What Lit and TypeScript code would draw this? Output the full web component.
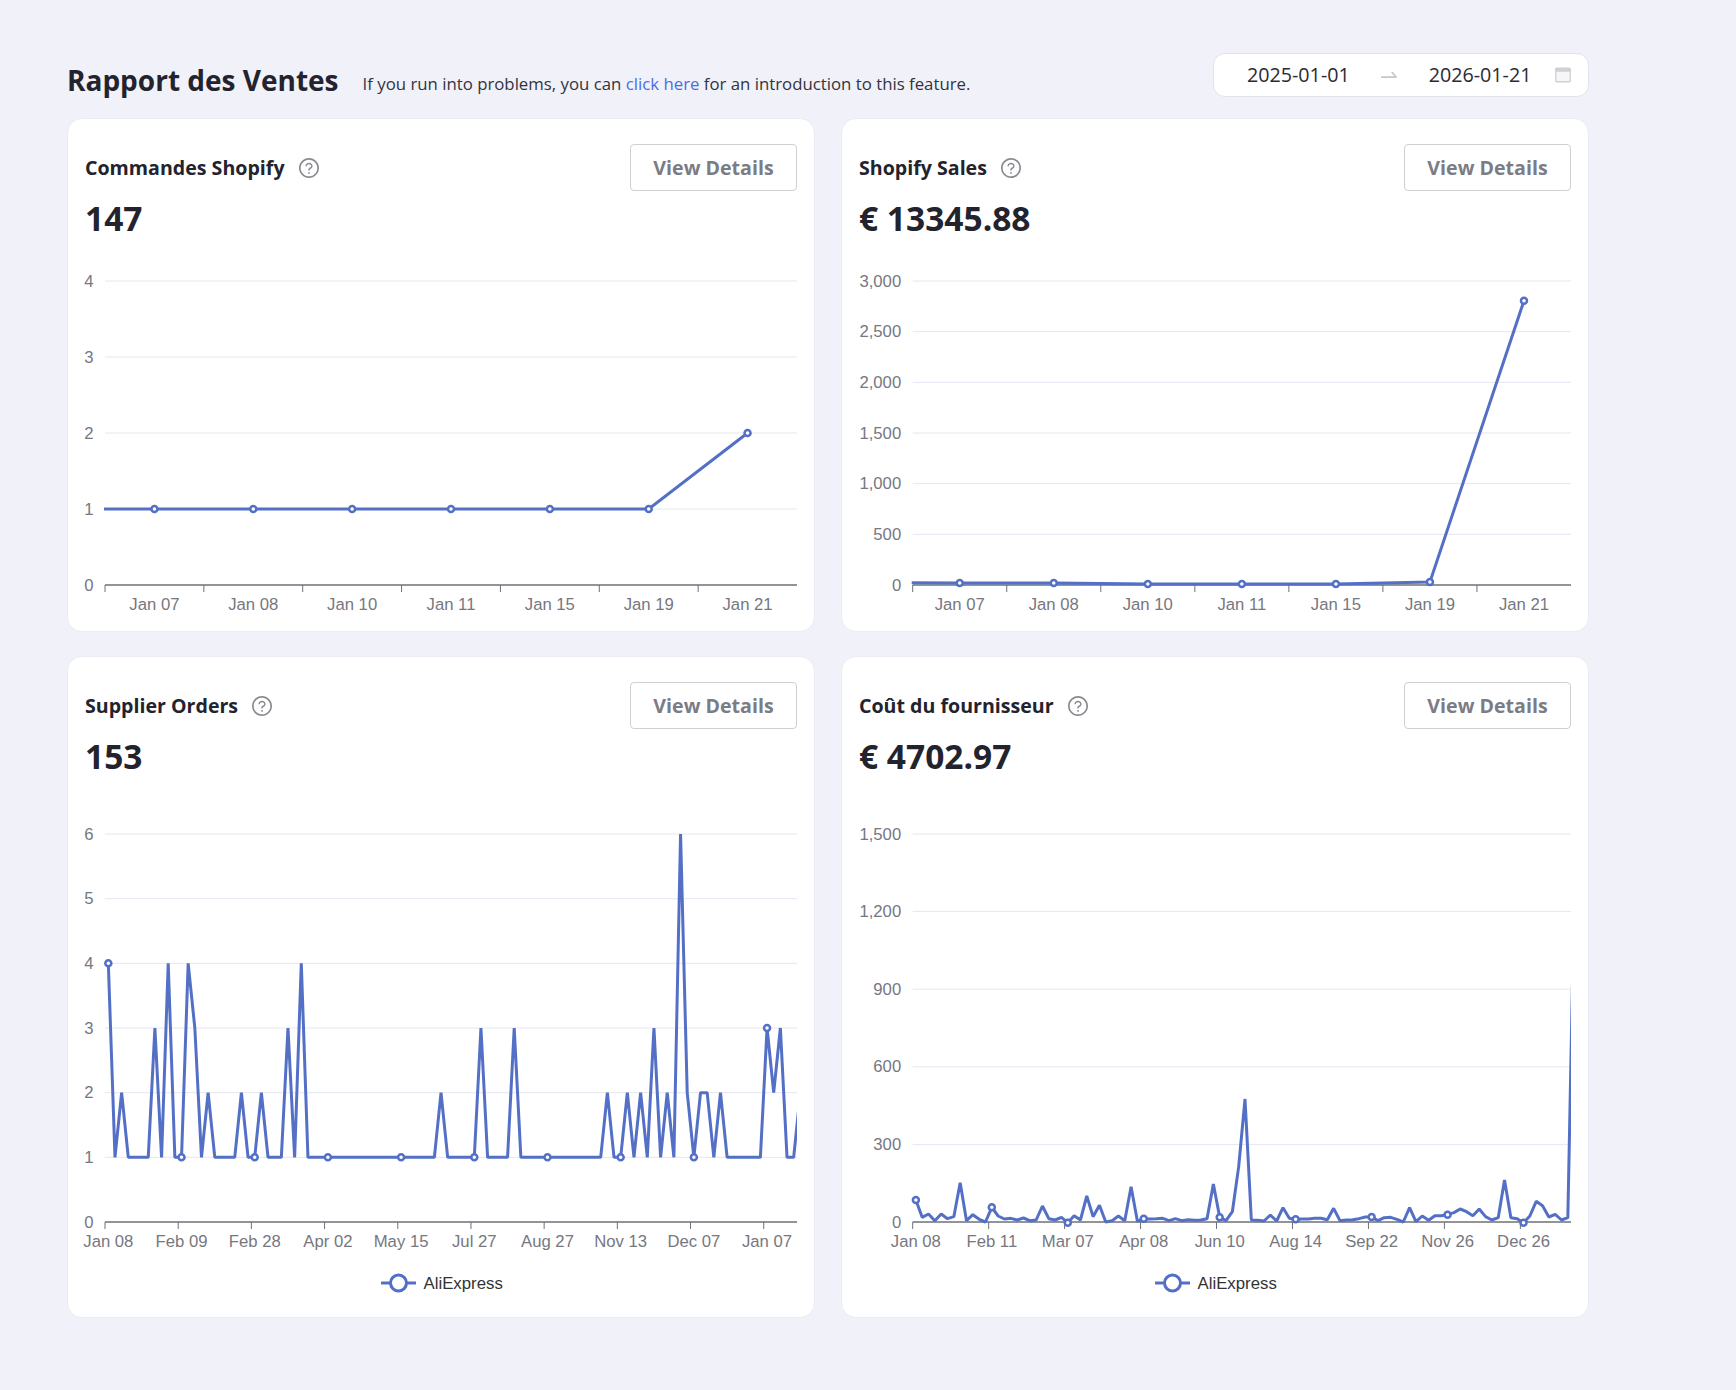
import { LitElement, html, css, svg } from "lit";
import { customElement, property } from "lit/decorators.js";

interface ChartConfig {
  axisLeft: number;
  top: number;
  axisY: number;
  height: number;
  yTicks: number[];
  data: number[];
  count: number;
  every: number;
  labels: string[];
  lead?: number;
  legend?: string;
}

const WIDTH = 712;

@customElement("line-chart")
class LineChart extends LitElement {
  @property({ attribute: false }) config!: ChartConfig;

  static styles = css`
    :host { display: block; }
    svg { display: block; width: 712px; overflow: visible; }
    .grid { stroke: #e4e7f2; stroke-width: 1; }
    .axis { stroke: #6e7079; stroke-width: 1.5; }
    .tick { stroke: #6e7079; stroke-width: 1; }
    .lbl { font: 16.7px "Liberation Sans", Arial, sans-serif; fill: #77777f; }
    .series { fill: none; stroke: #5470c6; stroke-width: 3; stroke-linejoin: bevel; }
    .mark { fill: #fff; stroke: #5470c6; stroke-width: 2.5; }
    .legend-line { stroke: #5470c6; stroke-width: 3; }
    .legend-mark { fill: #fff; stroke: #5470c6; stroke-width: 3; }
    .legend-text { font: 16.8px "Liberation Sans", Arial, sans-serif; fill: #333; }
  `;

  render() {
    const c = this.config;
    const max = c.yTicks[c.yTicks.length - 1];
    const step = (WIDTH - c.axisLeft) / c.count;
    const yOf = (v: number) => c.axisY - (v / max) * (c.axisY - c.top);
    const xOf = (i: number) => c.axisLeft + (i + 0.5) * step;
    const pts = c.data.map((v, i) => [xOf(i), yOf(v)]);
    if (c.lead !== undefined) pts.unshift([c.axisLeft - 1, yOf(c.lead)]);
    const line = pts.map((p) => `${p[0].toFixed(2)},${p[1].toFixed(2)}`).join(" ");
    const tickIdx = c.labels.map((_, i) => i * c.every);
    return html`<svg height=${c.height} viewBox="0 0 ${WIDTH} ${c.height}">
      <defs>
        <clipPath id="plot"><rect x=${c.axisLeft - 4} y="0" width=${WIDTH - c.axisLeft + 4} height=${c.axisY + 10}></rect></clipPath>
      </defs>
      ${c.yTicks.map((t) => svg`
        ${t > 0 ? svg`<line class="grid" x1=${c.axisLeft} x2=${WIDTH} y1=${yOf(t)} y2=${yOf(t)}></line>` : ""}
        <text class="lbl" x=${c.axisLeft - 11.5} y=${yOf(t) + 5.5} text-anchor="end">${t.toLocaleString("en-US")}</text>
      `)}
      <line class="axis" x1=${c.axisLeft} x2=${WIDTH} y1=${c.axisY} y2=${c.axisY}></line>
      ${tickIdx.map((i) => svg`
        <line class="tick" x1=${c.axisLeft + i * step} x2=${c.axisLeft + i * step} y1=${c.axisY} y2=${c.axisY + 7}></line>
        <text class="lbl" x=${xOf(i)} y=${c.axisY + 24.5} text-anchor="middle">${c.labels[i / c.every]}</text>
      `)}
      <g clip-path="url(#plot)">
        <polyline class="series" points=${line}></polyline>
      </g>
      ${tickIdx.map((i) => svg`<circle class="mark" cx=${xOf(i)} cy=${yOf(c.data[i])} r="3"></circle>`)}
      ${c.legend
        ? svg`
        <line class="legend-line" x1="296" x2="331" y1=${c.height - 17} y2=${c.height - 17}></line>
        <circle class="legend-mark" cx="313.5" cy=${c.height - 17} r="8"></circle>
        <text class="legend-text" x="338.5" y=${c.height - 11.5}>${c.legend}</text>`
        : ""}
    </svg>`;
  }
}

const supplier = [
  4, 1, 2, 1, 1, 1, 1, 3, 1, 4, 1, 1, 4, 3, 1, 2, 1, 1, 1, 1, 2, 1, 1, 2, 1, 1, 1, 3, 1, 4, 1, 1, 1, 1, 1, 1, 1, 1, 1, 1,
  1, 1, 1, 1, 1, 1, 1, 1, 1, 1, 2, 1, 1, 1, 1, 1, 3, 1, 1, 1, 1, 3, 1, 1, 1, 1, 1, 1, 1, 1, 1, 1, 1, 1, 1, 2, 1, 1, 2, 1,
  2, 1, 3, 1, 2, 1, 6, 2, 1, 2, 2, 1, 2, 1, 1, 1, 1, 1, 1, 3, 2, 3, 1, 1, 2,
];

// Heights of the cost series above the axis, in thirds of a pixel.
const costHeights = [
  66, 14, 24, 4, 24, 10, 16, 118, 4, 22, 8, 0, 44, 18, 9, 11, 6, 12, 4, 6, 48, 10, 6, 14, -2, 19, 6, 78, 16, 50, 0, 4,
  18, 4, 106, 2, 10, 9, 10, 11, 4, 10, 4, 7, 5, 6, 10, 114, 14, 4, 31, 166, 369, 6, 5, 3, 21, 3, 43, 11, 8, 9, 9, 11, 11,
  7, 41, 4, 6, 7, 10, 15, 15, 4, 13, 14, 8, 0, 43, 1, 18, 5, 19, 19, 22, 28, 39, 31, 19, 39, 16, 6, 13, 126, 13, 10, -2,
  18, 62, 49, 15, 23, 6, 13, 975,
];
const cost = costHeights.map((h) => h * 1.2887);

const charts = {
  orders: {
    axisLeft: 20, top: 41, axisY: 345, height: 377, yTicks: [0, 1, 2, 3, 4],
    data: [1, 1, 1, 1, 1, 1, 2], lead: 1, count: 7, every: 1,
    labels: ["Jan 07", "Jan 08", "Jan 10", "Jan 11", "Jan 15", "Jan 19", "Jan 21"],
  },
  sales: {
    axisLeft: 53.7, top: 41, axisY: 345, height: 377, yTicks: [0, 500, 1000, 1500, 2000, 2500, 3000],
    data: [20, 20, 10, 10, 10, 30, 2805], lead: 22, count: 7, every: 1,
    labels: ["Jan 07", "Jan 08", "Jan 10", "Jan 11", "Jan 15", "Jan 19", "Jan 21"],
  },
  supplier: {
    axisLeft: 20, top: 56, axisY: 444, height: 522, yTicks: [0, 1, 2, 3, 4, 5, 6],
    data: supplier, count: 104, every: 11, legend: "AliExpress",
    labels: ["Jan 08", "Feb 09", "Feb 28", "Apr 02", "May 15", "Jul 27", "Aug 27", "Nov 13", "Dec 07", "Jan 07"],
  },
  cost: {
    axisLeft: 53.7, top: 56, axisY: 444, height: 522, yTicks: [0, 300, 600, 900, 1200, 1500],
    data: cost, count: 104, every: 12, legend: "AliExpress",
    labels: ["Jan 08", "Feb 11", "Mar 07", "Apr 08", "Jun 10", "Aug 14", "Sep 22", "Nov 26", "Dec 26"],
  },
} satisfies Record<string, ChartConfig>;

const helpIcon = html`<svg class="help" viewBox="64 64 896 896" aria-hidden="true">
  <path d="M512 64C264.6 64 64 264.6 64 512s200.6 448 448 448 448-200.6 448-448S759.4 64 512 64zm0 820c-205.4 0-372-166.6-372-372s166.6-372 372-372 372 166.6 372 372-166.6 372-372 372z"></path>
  <path d="M623.6 316.7C593.6 290.4 554 276 512 276s-81.6 14.5-111.6 40.7C369.2 344 352 380.7 352 420v7.6c0 4.4 3.6 8 8 8h48c4.4 0 8-3.6 8-8V420c0-44.1 43.1-80 96-80s96 35.9 96 80c0 31.1-22 59.6-56.1 72.7-21.2 8.1-39.2 22.3-52.1 40.9-13.1 19-19.9 41.8-19.9 64.9V620c0 4.4 3.6 8 8 8h48c4.4 0 8-3.6 8-8v-22.7a48.3 48.3 0 0 1 30.9-44.8c59-22.7 97.1-74.7 97.1-132.5.1-39.3-17.1-76-48.3-103.3zM472 732a40 40 0 1 0 80 0 40 40 0 1 0-80 0z"></path>
</svg>`;

@customElement("app-root")
class AppRoot extends LitElement {
  static styles = css`
    :host { display: block; min-height: 1390px; background: #f1f1f9; font-family: "Open Sans", "Noto Sans", sans-serif; color: #23232e; }
    .page { box-sizing: border-box; width: 1736px; padding: 53px 147px 0 67px; }
    .header { display: flex; align-items: center; height: 43px; margin-bottom: 22px; }
    h1 { margin: 0; font-size: 28px; font-weight: 700; line-height: 56px; height: 56px; color: #23232e; position: relative; top: 5px; }
    .intro { margin-left: 24px; font-size: 16.8px; color: #33333d; position: relative; top: 9px; }
    .intro a { color: #4a6ee0; text-decoration: none; }
    .picker { margin-left: auto; box-sizing: border-box; width: 376px; height: 44px; display: flex; align-items: center; padding: 0 17px 0 33px; background: #fff; border: 1px solid #e2e2ea; border-radius: 12px; font-size: 19.7px; color: #2a2a33; }
    .picker .arrow { width: 22px; height: 22px; margin: 0 29px 0 28px; fill: #c6c6cc; }
    .picker .cal { width: 16px; height: 16px; margin-left: auto; }
    .grid { display: grid; grid-template-columns: 748px 748px; column-gap: 26px; row-gap: 24px; }
    .card { box-sizing: border-box; padding: 25px 17px 14px; background: #fff; border: 1px solid #ebebf3; border-radius: 15px; }
    .row2 { padding-top: 25px; padding-bottom: 17px; }
    .head { display: flex; align-items: center; height: 47px; }
    .title { font-size: 19.6px; font-weight: 700; color: #23232e; }
    .help { width: 20px; height: 20px; margin-left: 14px; fill: #8a8a90; }
    button { margin-left: auto; box-sizing: border-box; width: 167px; height: 47px; padding: 0; background: #fff; border: 1.5px solid #cfcfd4; border-radius: 4px; font: 700 19.6px "Open Sans", sans-serif; color: #7c7c84; }
    .value { margin-top: 5px; font-size: 33.5px; font-weight: 700; line-height: 44px; color: #23232e; }
  `;

  private card(title: string, value: string, cfg: ChartConfig, cls = "") {
    return html`<section class="card ${cls}">
      <div class="head">
        <span class="title">${title}</span>
        ${helpIcon}
        <button>View Details</button>
      </div>
      <div class="value">${value}</div>
      <line-chart .config=${cfg}></line-chart>
    </section>`;
  }

  render() {
    return html`<div class="page">
      <header class="header">
        <h1>Rapport des Ventes</h1>
        <span class="intro">If you run into problems, you can <a href="#">click here</a> for an introduction to this feature.</span>
        <div class="picker">
          <span class="date">2025-01-01</span>
          <svg class="arrow" viewBox="0 0 1024 1024"><path d="M873.1 596.2l-164-208A32 32 0 0 0 684 376h-64.8c-6.7 0-10.4 7.7-6.3 13l144.3 183H152c-4.4 0-8 3.6-8 8v60c0 4.4 3.6 8 8 8h695.9c26.8 0 41.7-30.8 25.2-51.8z"></path></svg>
          <span class="date">2026-01-21</span>
          <svg class="cal" viewBox="0 0 16 16">
            <rect x="0.75" y="1.25" width="14.5" height="13.5" rx="1" fill="#f6f6f8" stroke="#cfcfd4" stroke-width="1.3"></rect>
            <rect x="0.75" y="1.25" width="14.5" height="3.5" fill="#cfcfd4"></rect>
          </svg>
        </div>
      </header>
      <div class="grid">
        ${this.card("Commandes Shopify", "147", charts.orders)}
        ${this.card("Shopify Sales", "€ 13345.88", charts.sales)}
        ${this.card("Supplier Orders", "153", charts.supplier, "row2")}
        ${this.card("Coût du fournisseur", "€ 4702.97", charts.cost, "row2")}
      </div>
    </div>`;
  }
}

export { AppRoot, LineChart };
